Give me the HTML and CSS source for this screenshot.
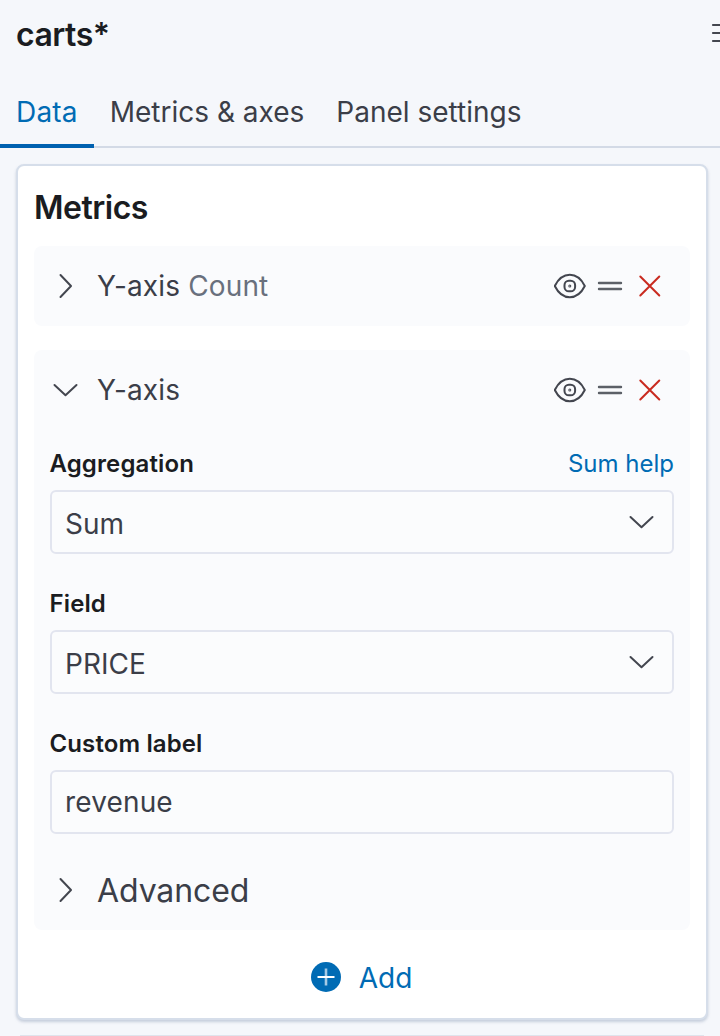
FILE: index.html
```html
<!DOCTYPE html>
<html lang="en">
<head>
<meta charset="utf-8">
<title>carts*</title>
<link rel="stylesheet" href="styles.css">
</head>
<body>
<svg class="defs" width="0" height="0" aria-hidden="true">
  <symbol id="right" viewBox="0 0 32 32"><path d="M10.500 5l10.500 11-10.500 11"/></symbol>
  <symbol id="down" viewBox="0 0 32 32"><path d="M4.500 11l11 10.300L26.500 11"/></symbol>
  <symbol id="eye" viewBox="0 0 32 32"><path d="M.8 16C4.500 8.500 9.500 4.800 15.800 4.800S27.100 8.500 30.800 16c-3.700 7.500-8.700 11.200-15 11.200S4.500 23.500.8 16z"/><rect x="10.500" y="10.700" width="10.600" height="10.600" rx="4.400"/><circle cx="15.800" cy="16" r=".5"/></symbol>
  <symbol id="grab" viewBox="0 0 32 32"><path d="M5 13h22M5 19h22"/></symbol>
  <symbol id="cross" viewBox="0 0 32 32"><path d="M6.300 6.500l19 19m0-19l-19 19"/></symbol>
</svg>
<header class="header">
  <h1 class="title">carts*</h1>
  <svg class="icon menu" viewBox="0 0 32 32"><path d="M3 8h26M3 16h26M3 24h26"/></svg>
</header>
<nav class="tabs">
  <a class="tab tab-selected">Data</a>
  <a class="tab">Metrics &amp; axes</a>
  <a class="tab">Panel settings</a>
</nav>
<main class="content">
  <section class="panel">
    <h2 class="panel-title">Metrics</h2>
    <div class="group">
      <div class="row">
        <svg class="icon"><use href="#right"/></svg>
        <span class="row-label">Y-axis <span class="subdued">Count</span></span>
        <div class="actions">
          <svg class="icon"><use href="#eye"/></svg>
          <svg class="icon grab"><use href="#grab"/></svg>
          <svg class="icon danger"><use href="#cross"/></svg>
        </div>
      </div>
    </div>
    <div class="group">
      <div class="row">
        <svg class="icon"><use href="#down"/></svg>
        <span class="row-label">Y-axis</span>
        <div class="actions">
          <svg class="icon"><use href="#eye"/></svg>
          <svg class="icon grab"><use href="#grab"/></svg>
          <svg class="icon danger"><use href="#cross"/></svg>
        </div>
      </div>
      <div class="form">
        <div class="field">
          <div class="field-head"><span class="label">Aggregation</span><a class="help">Sum help</a></div>
          <div class="control"><span>Sum</span><svg class="icon"><use href="#down"/></svg></div>
        </div>
        <div class="field">
          <div class="field-head"><span class="label">Field</span></div>
          <div class="control"><span>PRICE</span><svg class="icon"><use href="#down"/></svg></div>
        </div>
        <div class="field">
          <div class="field-head"><span class="label">Custom label</span></div>
          <div class="control control-text"><span>revenue</span></div>
        </div>
      </div>
      <div class="row advanced">
        <svg class="icon"><use href="#right"/></svg>
        <span class="row-label">Advanced</span>
      </div>
    </div>
    <div class="add">
      <svg class="add-icon" viewBox="0 0 30 30"><circle cx="15" cy="15" r="15"/><path class="plus-v" d="M15 6.500v17"/><path class="plus-h" d="M6.500 15h17"/></svg>
      <span>Add</span>
    </div>
  </section>
  <div class="panel-next"></div>
</main>
</body>
</html>
```
FILE: styles.css
```css
* { box-sizing: border-box; }
body {
  margin: 0;
  height: 1036px;
  overflow: hidden;
  background: #f5f7fb;
  color: #3b3e48;
  font-family: Inter, "Liberation Sans", sans-serif;
  font-size: 28px;
  line-height: 40px;
  letter-spacing: 0;
  white-space: nowrap;
}
.defs { display: block; }
.icon {
  width: 32px;
  height: 32px;
  flex: none;
  fill: none;
  stroke: #43464f;
  stroke-width: 2;
  stroke-linecap: round;
  stroke-linejoin: round;
}
.header {
  display: flex;
  justify-content: space-between;
  align-items: center;
  height: 72px;
  padding: 0 0 3px 16px;
  overflow: hidden;
}
.header .menu { margin: -4px -22px 0 0; stroke-width: 2.2; }
.title, .panel-title {
  margin: 0;
  color: #1a1c21;
  font-size: 32px;
  font-weight: 600;
  line-height: 48px;
  letter-spacing: -0.5px;
}
.title { padding-top: 1px; }
.tabs {
  display: flex;
  height: 76px;
  box-shadow: inset 0 -2px #d3dae6;
}
.tab { padding: 20px 16px 0; }
.tab:last-child { padding-left: 16px; }
.tab-selected { color: #006bb4; border-bottom: 4px solid #0061b0; letter-spacing: 0.2px; }
.content { padding: 16px 12px 0 16px; }
.panel {
  height: 856px;
  padding: 16px;
  background: #fff;
  border: 2px solid #d6deea;
  border-radius: 8px;
  box-shadow: 0 2px 3px rgba(110, 130, 160, .35);
}
.panel-next {
  height: 1px;
  margin: 15px 4px 0;
  background: #dfe4ec;
}
.panel-title { margin-bottom: 14px; padding-top: 2px; }
.group {
  margin-bottom: 24px;
  background: #fafbfd;
  border-radius: 8px;
}
.row {
  display: flex;
  align-items: center;
  height: 80px;
  padding: 0 24px 0 16px;
  letter-spacing: 0.15px;
}
.row-label { margin-left: 15px; }
.subdued { color: #69707d; }
.actions { display: flex; gap: 8px; margin-left: auto; }
.grab { stroke: #5c6067; stroke-width: 2.4; }
.danger { stroke: #c92b20; }
.form {
  display: flex;
  flex-direction: column;
  gap: 32px;
  padding: 16px 16px 0;
}
.field-head {
  display: flex;
  justify-content: space-between;
  height: 44px;
  font-size: 24px;
  line-height: 36px;
}
.label { margin-left: -0.5px; color: #1a1c21; font-weight: 600; letter-spacing: 0.12px; }
.help { color: #006bb4; }
.control {
  display: flex;
  justify-content: space-between;
  align-items: center;
  height: 64px;
  padding: 4px 14px 0 13px;
  background: #fbfcfd;
  border: 2px solid #e2e5ef;
  border-radius: 6px;
}
.control .icon { margin-top: -4px; }
.control-text { padding-top: 0; letter-spacing: 0.15px; }
.advanced { height: 96px; padding-top: 16px; font-size: 32px; letter-spacing: -0.1px; }
.advanced .row-label { padding-top: 2px; }
.add {
  display: flex;
  justify-content: center;
  align-items: center;
  gap: 18px;
  height: 48px;
  padding-right: 1px;
  color: #006bb4;
}
.add-icon { width: 30px; height: 30px; margin-top: -2px; fill: #006bb4; stroke: #fff; stroke-width: 2; }
.add-icon circle { stroke: none; }
.add-icon .plus-v { stroke: #a5cae5; stroke-width: 2.6; }
```
